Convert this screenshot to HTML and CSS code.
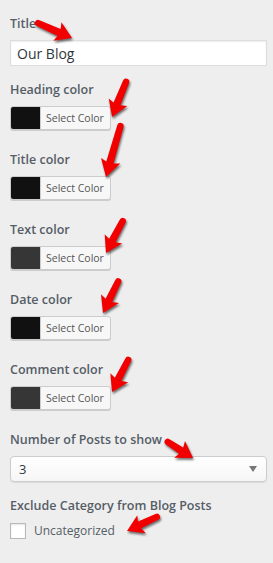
FILE: index.html
```html
<!DOCTYPE html>
<html lang="en">
  <head>
    <meta charset="UTF-8" />
    <meta name="viewport" content="width=device-width, initial-scale=1.0" />
    <link rel="stylesheet" href="styles.css">
  </head>
  <body>
    <div class="panel">
      <div class="field field-text">
        <label class="field-label" for="title">Title</label>
        <input id="title" class="text-input" type="text" value="Our Blog" />
      </div>

      <div class="field">
        <span class="field-label">Heading color</span>
        <button class="color-btn"><span class="swatch swatch-black"></span><span class="color-text">Select Color</span></button>
      </div>
      <div class="field">
        <span class="field-label">Title color</span>
        <button class="color-btn"><span class="swatch swatch-black"></span><span class="color-text">Select Color</span></button>
      </div>
      <div class="field">
        <span class="field-label">Text color</span>
        <button class="color-btn"><span class="swatch swatch-dark"></span><span class="color-text">Select Color</span></button>
      </div>
      <div class="field">
        <span class="field-label">Date color</span>
        <button class="color-btn"><span class="swatch swatch-black"></span><span class="color-text">Select Color</span></button>
      </div>
      <div class="field">
        <span class="field-label">Comment color</span>
        <button class="color-btn"><span class="swatch swatch-dark"></span><span class="color-text">Select Color</span></button>
      </div>

      <div class="field field-text">
        <span class="field-label">Number of Posts to show</span>
        <div class="select">
          <span>3</span>
          <span class="select-arrow"></span>
        </div>
      </div>

      <div class="field">
        <span class="field-label">Exclude Category from Blog Posts</span>
        <label class="check">
          <span class="check-box"></span>
          <span>Uncategorized</span>
        </label>
      </div>
    </div>

    <!-- red annotation arrows drawn over the panel -->
    <svg class="arrows" width="273" height="563" viewBox="0 0 273 563">
      <g fill="#f20000">
        <path transform="translate(72 38) rotate(24)" d="M0 0 L-16 -10 L-14 -3.5 L-37 -3 A3.2 3.2 0 0 0 -37 3.4 L-14 4 L-16 10 Z" />
        <path transform="translate(112 117) rotate(112)" d="M0 0 L-16 -10 L-14 -3.5 L-38 -3 A3.2 3.2 0 0 0 -38 3.4 L-14 4 L-16 10 Z" />
        <path transform="translate(106 177) rotate(106)" d="M0 0 L-17 -10 L-15 -3.5 L-53 -3 A3.2 3.2 0 0 0 -53 3.4 L-15 4 L-17 10 Z" />
        <path transform="translate(106 253) rotate(118)" d="M0 0 L-16 -10 L-14 -3.5 L-36 -3 A3.2 3.2 0 0 0 -36 3.4 L-14 4 L-16 10 Z" />
        <path transform="translate(103 313) rotate(116)" d="M0 0 L-16 -10 L-14 -3.5 L-35 -3 A3.2 3.2 0 0 0 -35 3.4 L-14 4 L-16 10 Z" />
        <path transform="translate(112 392) rotate(117)" d="M0 0 L-16 -10 L-14 -3.5 L-36 -3 A3.2 3.2 0 0 0 -36 3.4 L-14 4 L-16 10 Z" />
        <path transform="translate(193 458) rotate(33)" d="M0 0 L-16 -10 L-14 -3.5 L-30 -3 A3.2 3.2 0 0 0 -30 3.4 L-14 4 L-16 10 Z" />
        <path transform="translate(127 531) rotate(155)" d="M0 0 L-16 -10 L-14 -3.5 L-33 -3 A3.2 3.2 0 0 0 -33 3.4 L-14 4 L-16 10 Z" />
      </g>
    </svg>
  </body>
</html>
```

FILE: styles.css
```css
* {
  box-sizing: border-box;
}
body {
  margin: 0;
  position: relative;
  background: #eeeeee;
  font-family: "Open Sans", "Noto Sans", sans-serif;
  color: #555d66;
}
.panel {
  padding: 14px 6px 20px 10px;
}
.field {
  margin-bottom: 20px;
}
.field-text {
  margin-bottom: 14px;
}
.field-label {
  display: block;
  font-size: 12.5px;
  font-weight: 600;
  line-height: 20px;
  margin-bottom: 6px;
}
.text-input {
  display: block;
  width: 100%;
  height: 26px;
  margin: 0;
  padding: 0 6px;
  border: 1px solid #dddddd;
  background: #ffffff;
  box-shadow: inset 0 1px 2px rgba(0, 0, 0, 0.07);
  font-family: inherit;
  font-size: 14px;
  color: #32373c;
}
.color-btn {
  display: flex;
  height: 24px;
  margin: 0;
  padding: 0;
  border: 1px solid #cccccc;
  border-radius: 3px;
  overflow: hidden;
  background: #f7f7f7;
  box-shadow: 0 1px 0 #cccccc;
  font-family: inherit;
  color: #555555;
}
.swatch {
  width: 30px;
  height: 100%;
  border-right: 1px solid #cccccc;
}
.swatch-black {
  background: #111111;
}
.swatch-dark {
  background: #363636;
}
.color-text {
  padding: 0 6px 0 5px;
  font-size: 10.5px;
  line-height: 22px;
}
.select {
  display: flex;
  align-items: center;
  justify-content: space-between;
  height: 26px;
  padding: 0 8px;
  border: 1px solid #cccccc;
  border-radius: 4px;
  background: linear-gradient(#ffffff, #f6f6f6);
  box-shadow: 0 1px 1px rgba(0, 0, 0, 0.08);
  font-size: 13px;
  color: #32373c;
}
.select-arrow {
  width: 0;
  height: 0;
  border-left: 4px solid transparent;
  border-right: 4px solid transparent;
  border-top: 6px solid #777777;
  margin-right: 1px;
}
.check {
  display: flex;
  align-items: center;
  gap: 8px;
  font-size: 12px;
  color: #555d66;
}
.check-box {
  width: 16px;
  height: 16px;
  border: 1px solid #b4b9be;
  background: #ffffff;
  box-shadow: inset 0 1px 2px rgba(0, 0, 0, 0.1);
}
.arrows {
  position: absolute;
  top: 0;
  left: 0;
  pointer-events: none;
  filter: drop-shadow(1px 2px 1px rgba(0, 0, 0, 0.55));
}
```
